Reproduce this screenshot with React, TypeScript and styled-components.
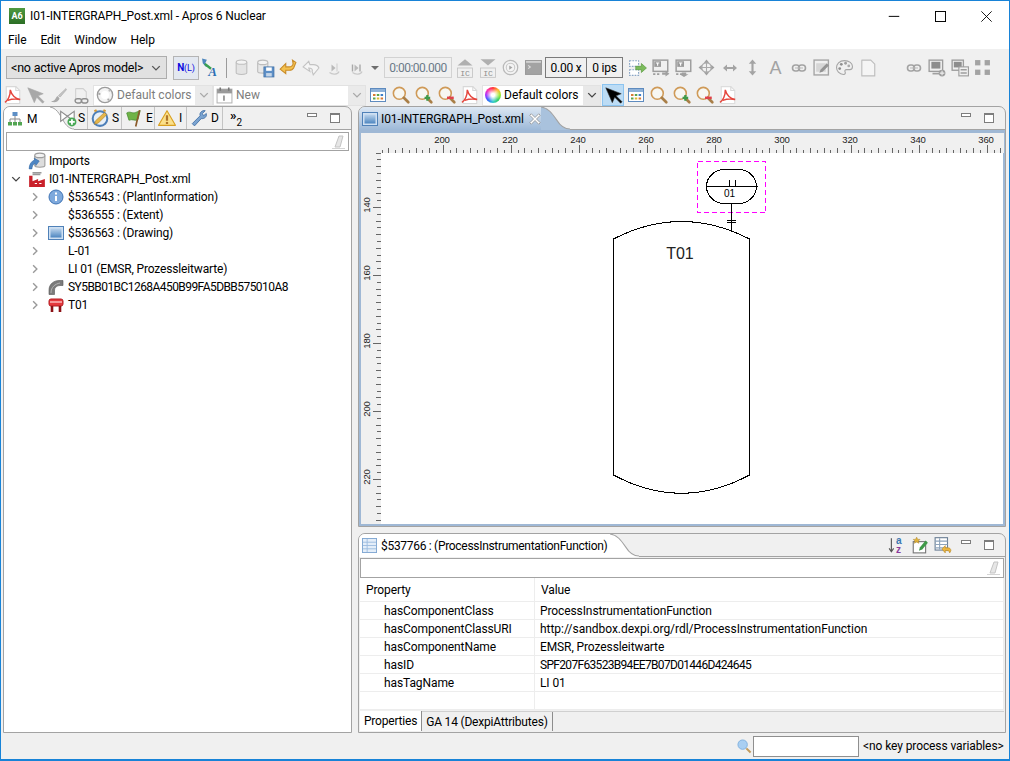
import { ReactNode } from "react";
import styled, { createGlobalStyle } from "styled-components";

const FONT = `"Roboto", "Noto Sans", "Liberation Sans", sans-serif`;
const GREY = "#a3a3a3";

const GlobalStyle = createGlobalStyle`
  html, body { margin: 0; padding: 0; background: #f0f0f0; }
  body { font-family: ${FONT}; font-size: 12px; color: #000; letter-spacing: -0.1px; }
  * { box-sizing: border-box; }
`;

const Glyph = styled.svg.attrs({ viewBox: "0 0 16 16" })<{ $size?: number }>`
  width: ${(p) => p.$size ?? 16}px;
  height: ${(p) => p.$size ?? 16}px;
  flex: none;
  display: block;
  overflow: visible;
`;

/* ---------- toolbar icons ---------- */

const PdfIcon = ({ muted }: { muted?: boolean }) => (
  <Glyph $size={18}>
    <path d="M2 .5h8.5L14 4v11.5H2z" fill="#fff" stroke={muted ? "#ddd" : "#d8d8d8"} />
    <path d="M10.5.5V4H14" fill="none" stroke="#d8d8d8" />
    <path
      d="M.8 14.6C3.2 13.4 5.8 8.6 5.6 3.4c1 4 3.4 7.4 8.8 8.6-4-.7-8-.3-11 .8"
      fill="none"
      stroke="#e5453c"
      strokeWidth="1.3"
    />
  </Glyph>
);

const CursorIcon = ({ muted }: { muted?: boolean }) => (
  <Glyph $size={19}>
    <path d="M1.5 1.5 7 14l2-4.6 5 5.1 1.2-1.2-5-5L14.500 6.500z" fill={muted ? "#a8a8a8" : "#000"} stroke={muted ? "#a8a8a8" : "#333"} strokeWidth=".5" />
  </Glyph>
);

const BrushIcon = () => (
  <Glyph $size={17}>
    <path d="M15 1.500 8 8l1.500 1.500L15.500 2.500z" fill="#c4c4c4" stroke="#aaa" strokeWidth=".6" />
    <path d="M7.500 8.500c-2 .5-2 3-3.500 4-1 .7-2 .8-3 .8 2 1.500 6 1.700 8-2.300z" fill="#a9a9a9" />
  </Glyph>
);

const DocLinkIcon = () => (
  <Glyph $size={17}>
    <path d="M2.500 1.500h7l3 3v7" fill="none" stroke="#d0d0d0" />
    <path d="M2.500 1.500v11" fill="none" stroke="#d0d0d0" />
    <rect x="2" y="11" width="6" height="4" rx="2" fill="none" stroke="#8f8f8f" strokeWidth="1.300" />
    <rect x="8" y="11" width="6" height="4" rx="2" fill="none" stroke="#8f8f8f" strokeWidth="1.300" />
  </Glyph>
);

const RingIcon = () => (
  <Glyph $size={18}>
    <circle cx="8" cy="8" r="6.800" fill="#f4f4f4" stroke="#9c9c9c" strokeWidth="1.200" />
    <circle cx="8" cy="8" r="3.500" fill="#fff" />
    <circle cx="3" cy="7" r="1" fill="#aaa" />
    <circle cx="12" cy="4" r="1" fill="#bbb" />
    <circle cx="11" cy="12" r="1" fill="#aaa" />
  </Glyph>
);

const CalendarIcon = () => (
  <Glyph $size={17}>
    <rect x="1" y="2" width="14" height="13" fill="#fff" stroke="#b5b5b5" />
    <rect x="1" y="2" width="14" height="4" fill="#9a9a9a" />
    <path d="M4 .5v3M12 .5v3" stroke="#777" strokeWidth="1.500" />
    <path d="M7.500 8v5" stroke="#888" strokeWidth="1.500" />
  </Glyph>
);

const TableIcon = () => (
  <Glyph $size={16}>
    <rect x=".5" y="1.500" width="15" height="13" fill="#fff" stroke="#5e8bbf" />
    <rect x="1" y="2" width="14" height="3" fill="#8fb2d9" />
    <path d="M3 7h2.500v2H3z" fill="#d97a35" />
    <path d="M6.800 7h2.500v2H6.800z" fill="#5aa34c" />
    <path d="M10.600 7h2.500v2h-2.500z" fill="#3f7ec6" />
    <path d="M3 10.500h2.500v2H3z" fill="#5aa34c" />
    <path d="M6.800 10.500h2.500v2H6.800z" fill="#e0b92f" />
    <path d="M10.600 10.500h2.500v2h-2.500z" fill="#d97a35" />
  </Glyph>
);

const PropsTableIcon = () => (
  <Glyph $size={15}>
    <rect x=".5" y=".5" width="15" height="15" fill="#e4eef9" stroke="#7fa6d2" />
    <path d="M1 4.500h14M1 8h14M1 11.500h14M5.500 1v14" stroke="#9dbde0" />
  </Glyph>
);

const Magnifier = ({ mark }: { mark?: "plus" | "minus" }) => (
  <Glyph $size={18}>
    <circle cx="6.500" cy="6.500" r="5.300" fill="#f7f7f2" stroke="#cf9a58" strokeWidth="1.400" />
    <path d="M10.500 10.500l4 4" stroke="#a97f48" strokeWidth="2.400" strokeLinecap="round" />
    {mark === "plus" && <path d="M8.500 10.500h5M11 8v5" stroke="#3f9a49" strokeWidth="2" />}
    {mark === "minus" && <path d="M8 10.500h6" stroke="#e0424a" strokeWidth="2.200" />}
  </Glyph>
);

const AproSwitchIcon = () => (
  <Glyph $size={22}>
    <path d="M1.500 1l3.500 1-1.200 2.500L7 7H4.200L2 4.500z" fill="#4d86bd" />
    <path d="M3.500 5l4.500 3.500" stroke="#3aa04f" strokeWidth="1.800" />
    <text x="6" y="14" fontFamily="Liberation Serif, serif" fontWeight="700" fontStyle="italic" fontSize="9.5" fill="#2d6fb5">A</text>
  </Glyph>
);

const DbIcon = () => (
  <Glyph $size={17}>
    <path d="M3 3v10c0 2 10 2 10 0V3" fill="#e4e4e4" stroke="#bdbdbd" />
    <ellipse cx="8" cy="3" rx="5" ry="2" fill="#f4f4f4" stroke="#bdbdbd" />
  </Glyph>
);

const DbSaveIcon = () => (
  <Glyph $size={18}>
    <path d="M1.500 3v8c0 2 9 2 9 0V3" fill="#e8e8e8" stroke="#bdbdbd" />
    <ellipse cx="6" cy="3" rx="4.500" ry="2" fill="#f4f4f4" stroke="#bdbdbd" />
    <rect x="7" y="7" width="9" height="9" fill="#5d8fc6" stroke="#3e6ea3" strokeWidth=".6" />
    <rect x="9" y="7.500" width="5" height="3" fill="#fff" />
    <rect x="9" y="12.500" width="5" height="3" fill="#c4d5e8" />
  </Glyph>
);

const UndoIcon = ({ ghost }: { ghost?: boolean }) =>
  ghost ? (
    <Glyph $size={18}>
      <path d="M1 7l5-5 1 3h3c4 0 5 3 5 3l-5 6-1-3c1-2-1-3-3-3H6l1 3z" fill="#f5f5f5" stroke="#c3c3c3" />
    </Glyph>
  ) : (
    <Glyph $size={18}>
      <path d="M1 9l5 4V10h3c3 0 4-2 4-2l2-5-3-2 .5 3c0 2-2 3-3.500 3H6V4z" fill="#f3c14e" stroke="#c98c2a" />
    </Glyph>
  );

const StepIcon = ({ bars }: { bars?: boolean }) => (
  <Glyph $size={16}>
    <path d="M3.500 12.500c3 2.500 8.500 2 9.500-1" fill="none" stroke="#c9c9c9" strokeWidth="1.200" />
    <path d="M5.500 4.500l4 3.500-4 3.500z" fill="#b9b9b9" />
    {bars && <path d="M3.500 4.500v7M11 4.500v7" stroke="#a9a9a9" strokeWidth="1.400" />}
    {!bars && <path d="M11 3.500v8" stroke="#d2d2d2" strokeWidth="1.200" />}
  </Glyph>
);

const ICIcon = ({ up }: { up?: boolean }) => (
  <Glyph $size={20}>
    <path d={up ? "M8 1l6 5H2z" : "M2 1h12L8 6z"} fill="#b0b0b0" />
    <rect x="2" y="8" width="12" height="7.500" fill="none" stroke="#c4c4c4" strokeWidth=".7" />
    <text x="8" y="14.500" textAnchor="middle" fontFamily="Liberation Mono, monospace" fontSize="6.500" fill="#8e8e8e">IC</text>
  </Glyph>
);

const ClockIcon = () => (
  <Glyph $size={17}>
    <circle cx="8" cy="8" r="6.800" fill="#f4f4f4" stroke="#b9b9b9" strokeWidth="1.200" />
    <circle cx="8" cy="8" r="4" fill="none" stroke="#c8c8c8" />
    <path d="M6.800 6l3 2-3 2z" fill="#a5a5a5" />
  </Glyph>
);

const ConsoleIcon = () => (
  <Glyph $size={17}>
    <rect x=".5" y="1.500" width="15" height="13" fill="#a3a3a3" stroke="#9a9a9a" />
    <rect x="1" y="2" width="14" height="1.500" fill="#d8d8d8" />
    <path d="M3 6l2 1.500L3 9" fill="none" stroke="#e0e0e0" />
  </Glyph>
);

const ExportArrowIcon = () => (
  <Glyph $size={18}>
    <rect x=".5" y="1.500" width="8" height="5" fill="#fff" stroke="#8aa6c6" strokeDasharray="1.500 1" />
    <rect x=".5" y="9.500" width="8" height="5" fill="#fff" stroke="#8aa6c6" strokeDasharray="1.500 1" />
    <path d="M6 6.500h5V4l4.500 4-4.500 4V9.500H6z" fill="#7cbb5c" stroke="#569a3c" strokeWidth=".6" />
  </Glyph>
);

const AlignIcon = ({ flip }: { flip?: boolean }) => (
  <Glyph $size={18}>
    <rect x="1" y="1" width="13" height="10" fill="#f0f0f0" stroke="#9d9d9d" strokeWidth="1.300" />
    <rect x="2" y="2" width="6" height="5" fill="#9b9b9b" />
    <path d="M3.500 3.500h3M5 3.500V6" stroke="#fff" />
    {flip ? (
      <path d="M6 12h4v1.500h2L8 16l-4-2.500h2z" fill="#a0a0a0" />
    ) : (
      <path d="M9 12h3v-1.500l3.500 2.500-3.500 2.500V14H9z" fill="#a0a0a0" />
    )}
    <path d="M1 13.500h2M4.500 13.500h2" stroke="#9d9d9d" strokeWidth="1.500" />
  </Glyph>
);

const MoveIcon = () => (
  <Glyph $size={17}>
    <circle cx="8" cy="8" r="4.500" fill="none" stroke="#aaa" strokeWidth="1.300" />
    <path d="M8 .5l2.500 3h-5zM8 15.500l-2.500-3h5zM.5 8l3-2.500v5zM15.500 8l-3 2.500v-5z" fill="#a0a0a0" />
    <path d="M8 3v10M3 8h10" stroke="#aaa" />
  </Glyph>
);

const ResizeHIcon = () => (
  <Glyph $size={16}>
    <path d="M1 8l4-3.500v2.500h6V4.500L15 8l-4 3.500V9H5v2.500z" fill="#a4a4a4" />
  </Glyph>
);

const ResizeVIcon = () => (
  <Glyph $size={17}>
    <path d="M8 .5l3.500 4H9v7h2.500l-3.500 4-3.500-4H7v-7H4.500z" fill="#a4a4a4" />
  </Glyph>
);

const ToolLetter = styled.span`
  font-family: "Liberation Sans", sans-serif;
  font-size: 18px;
  line-height: 22px;
  letter-spacing: 0;
  color: #a3a3a3;
`;

const LinkIcon = () => (
  <Glyph $size={16}>
    <rect x="1.500" y="5" width="7" height="6" rx="3" fill="none" stroke="#a3a3a3" strokeWidth="1.600" />
    <rect x="7.500" y="5" width="7" height="6" rx="3" fill="none" stroke="#a3a3a3" strokeWidth="1.600" />
    <path d="M4 8h8" stroke="#b9b9b9" />
  </Glyph>
);

const EditBoxIcon = () => (
  <Glyph $size={17}>
    <rect x="1" y="1" width="13.500" height="14" fill="#f0f0f0" stroke="#a5a5a5" strokeWidth="1.300" />
    <path d="M3 4h9v8H3z" fill="#d6d6d6" />
    <path d="M6 13l1-3 6-6 2 2-6 6z" fill="#949494" />
  </Glyph>
);

const PaletteIcon = () => (
  <Glyph $size={17}>
    <path d="M8 1.500C3 1.500.5 5 .5 8s2.500 6.500 6.500 6.500c2 0 2-1.500 1.500-2.500s0-2 1.500-2h3c2 0 2.500-1.500 2.500-3 0-3-3-5.500-7.500-5.500z" fill="#f0f0f0" stroke="#a5a5a5" />
    <circle cx="5" cy="5" r="1.300" fill="#8f8f8f" />
    <circle cx="9" cy="4" r="1.300" fill="#9f9f9f" />
    <circle cx="3.500" cy="9" r="1.300" fill="#8f8f8f" />
    <circle cx="12" cy="6.500" r="1.300" fill="#aaa" />
  </Glyph>
);

const BlankDocIcon = () => (
  <Glyph $size={18}>
    <path d="M2.500 1h8l3.500 3.500V15H2.500z" fill="#f5f5f5" stroke="#bdbdbd" strokeLinejoin="round" />
  </Glyph>
);

const ScreenPlusIcon = () => (
  <Glyph $size={18}>
    <rect x="1" y="1" width="12" height="10" fill="#f0f0f0" stroke="#9d9d9d" strokeWidth="1.200" />
    <rect x="3" y="2.500" width="8" height="6" fill="#8d8d8d" />
    <path d="M4 13h6" stroke="#a0a0a0" strokeWidth="1.500" />
    <circle cx="12.500" cy="12.500" r="3" fill="#9d9d9d" />
    <path d="M10.500 12.500h4M12.500 10.500v4" stroke="#eee" />
  </Glyph>
);

const ScreenStackIcon = () => (
  <Glyph $size={18}>
    <rect x="1" y="1" width="10" height="9" fill="#f0f0f0" stroke="#9d9d9d" strokeWidth="1.200" />
    <rect x="2.500" y="2.500" width="7" height="5" fill="#8d8d8d" />
    <rect x="7" y="7" width="8.500" height="8" fill="#f0f0f0" stroke="#9d9d9d" />
    <path d="M8.500 9.500h5.500M8.500 12.500h5.500" stroke="#9d9d9d" strokeWidth="1.400" />
  </Glyph>
);

const FourBoxIcon = () => (
  <Glyph $size={17}>
    <rect x="1" y="1" width="5" height="5" fill="#a3a3a3" />
    <rect x="10" y="1" width="5" height="5" fill="#a3a3a3" />
    <rect x="1" y="10" width="5" height="5" fill="#a3a3a3" />
    <rect x="10" y="10" width="5" height="5" fill="#a3a3a3" />
  </Glyph>
);

const EraserIcon = () => (
  <Glyph $size={16}>
    <path d="M5 13l4-11h4l-3 11z" fill="#e6e6e6" stroke="#c4c4c4" />
    <path d="M2 14.500h13" stroke="#d4d4d4" />
  </Glyph>
);

/* ---------- tab and tree icons ---------- */

const HierarchyIcon = () => (
  <Glyph>
    <rect x="5.500" y="1" width="5" height="4" fill="#5d8fc6" />
    <path d="M8 5v3M3 11V8h10v3M8 8v3" fill="none" stroke="#888" />
    <rect x="1" y="11" width="4" height="3.500" fill="#52a552" />
    <rect x="6" y="11" width="4" height="3.500" fill="#52a552" />
    <rect x="11" y="11" width="4" height="3.500" fill="#52a552" />
  </Glyph>
);

const MxPlusIcon = () => (
  <Glyph $size={18}>
    <path d="M1.500 2v9l6-4.500 6 4.500V2L7.500 6.500z" fill="#fff" stroke="#8d8d8d" />
    <circle cx="11.500" cy="11.500" r="4" fill="#4aa856" />
    <path d="M9 11.500h5M11.500 9v5" stroke="#fff" strokeWidth="1.600" />
  </Glyph>
);

const ClockPencilIcon = () => (
  <Glyph $size={18}>
    <circle cx="8" cy="8.500" r="6.500" fill="#e8f0f8" stroke="#4d7fb8" strokeWidth="1.800" />
    <path d="M3 2l2-1M13 2l-2-1" stroke="#d39a3a" strokeWidth="1.800" />
    <path d="M3 13.500l1-3L12 3l2 2-7.500 7.500z" fill="#e6b64a" stroke="#a87c26" strokeWidth=".5" />
  </Glyph>
);

const FlagIcon = () => (
  <Glyph $size={18}>
    <path d="M1.500 3.500c3-2 5 1 8-.5l4-1.500-2 8c-3 1.500-5-1-8 .5z" fill="#6fb347" stroke="#3f8428" strokeWidth=".6" />
    <path d="M13 1l-3.500 14.500" stroke="#8a5a2a" strokeWidth="1.500" />
  </Glyph>
);

const WarningIcon = () => (
  <Glyph $size={18}>
    <path d="M8 1.500 15.500 14.500H.5z" fill="#fbe08a" stroke="#d9a021" strokeLinejoin="round" />
    <path d="M8 5.500v5" stroke="#b0762a" strokeWidth="2" />
    <rect x="7" y="11.500" width="2" height="1.800" fill="#b0762a" />
  </Glyph>
);

const WrenchIcon = () => (
  <Glyph $size={18}>
    <path d="M2 13l7-7c-.8-2.500 1.500-5 4.500-4.500L11 4l1 2 2.500-2c.8 3-2 5-4.500 4.500L4 15z" fill="#7ba4d1" stroke="#4673a8" strokeWidth=".8" />
  </Glyph>
);

const DrawingIcon = () => (
  <Glyph>
    <rect x=".5" y="1.500" width="15" height="13" fill="#cfe0f2" stroke="#4f81b8" />
    <rect x="2.500" y="3.500" width="11" height="9" fill="url(#drawing-fill)" />
    <defs>
      <linearGradient id="drawing-fill" x1="0" x2="0" y1="0" y2="1">
        <stop offset="0" stopColor="#bcd4ec" />
        <stop offset="1" stopColor="#4d86c0" />
      </linearGradient>
    </defs>
  </Glyph>
);

const CloseTabIcon = () => (
  <Glyph $size={12}>
    <path d="M3 1l5 5 5-5 2 2-5 5 5 5-2 2-5-5-5 5-2-2 5-5-5-5z" fill="#fff" stroke="#8a8a8a" />
  </Glyph>
);

const ImportsIcon = () => (
  <Glyph $size={18}>
    <path d="M6 3v9c0 2 9 2 9 0V3" fill="#ddd" stroke="#9d9d9d" />
    <ellipse cx="10.500" cy="3" rx="4.500" ry="2" fill="#f2f2f2" stroke="#9d9d9d" />
    <path d="M1 15c0-4 2-7 5-8l-.5-1.500L10 8l-3 4-.5-2c-2 .5-3 3-3 5z" fill="#4d86c4" stroke="#2f66a3" strokeWidth=".5" />
  </Glyph>
);

const FactoryIcon = () => (
  <Glyph $size={18}>
    <path d="M4 2.500h8M4 4h7" stroke="#9a9a9a" strokeWidth="1.300" />
    <path d="M1 15V5h3v5l5-2v2l6-2v7z" fill="#c9202a" />
    <path d="M6 12h2M10 12h2" stroke="#fff" />
  </Glyph>
);

const InfoIcon = () => (
  <Glyph>
    <circle cx="8" cy="8" r="7" fill="#7ea9dc" stroke="#3f74b5" />
    <path d="M8 7v5" stroke="#fff" strokeWidth="2" />
    <rect x="7" y="3.500" width="2" height="2" fill="#fff" />
  </Glyph>
);

const PipeIcon = () => (
  <Glyph>
    <path d="M1 15.500V11C1 5 6 1.500 11 1.500h4v5h-3C9 6.500 6.500 8.500 6.500 11v4.500z" fill="#7b7b7b" stroke="#555" strokeWidth=".6" />
    <path d="M3 14c0-6 4-9 9-10" stroke="#b5b5b5" fill="none" />
  </Glyph>
);

const VesselIcon = () => (
  <Glyph>
    <rect x="1" y="2" width="14" height="7" rx="2" fill="#e5383d" stroke="#b51c22" />
    <path d="M2 5h12" stroke="#ffd0d0" strokeWidth="1.300" />
    <path d="M4 9v6M12 9v6" stroke="#8c1116" strokeWidth="2.600" />
  </Glyph>
);

const SearchSmallIcon = () => (
  <Glyph $size={15}>
    <circle cx="6" cy="6" r="5" fill="#a9cff2" stroke="#7fb0de" />
    <path d="M10 10l4.500 4.500" stroke="#c19a5b" strokeWidth="2.200" />
  </Glyph>
);

const SortAzIcon = () => (
  <Glyph $size={18}>
    <path d="M3 2v11M1 11l2 3 2-3" fill="none" stroke="#555" />
    <text x="7" y="7.500" fontFamily="Liberation Sans, sans-serif" fontWeight="700" fontSize="9" fill="#3d78b0">a</text>
    <text x="7" y="15.500" fontFamily="Liberation Sans, sans-serif" fontWeight="700" fontSize="9" fill="#8a3a9c">z</text>
  </Glyph>
);

const PinEditIcon = () => (
  <Glyph $size={18}>
    <rect x="2" y="5" width="11" height="10" fill="#fff" stroke="#777" />
    <path d="M5 1l1 2h2L6.500 4.500l.5 2L5 5.300 3 6.500l.5-2L2 3h2z" fill="#e2b33a" stroke="#a67c18" strokeWidth=".4" />
    <path d="M8 10l5-6 2 2-5 6-3 1z" fill="#3f9a49" />
  </Glyph>
);

const TableUndoIcon = () => (
  <Glyph $size={18}>
    <rect x="1" y="1.500" width="11" height="11" fill="#fff" stroke="#6b7f95" />
    <path d="M1 4.500h11M1 7.500h11M1 10.500h11M5 2v10" stroke="#8ea4bb" />
    <path d="M7 11.500l3-3v2h2.500c1.500 0 2.500 1 2.500 2.500l-1 2-1-2h-3v2z" fill="#edb63f" stroke="#b0801d" strokeWidth=".5" />
  </Glyph>
);

/* ---------- chrome ---------- */

const Shell = styled.div`
  width: 1010px;
  height: 761px;
  display: flex;
  flex-direction: column;
  overflow: hidden;
  background: #f0f0f0;
  border: 1px solid #1883d7;
  border-bottom-width: 2px;
`;

const TitleBar = styled.header`
  height: 30px;
  flex: none;
  display: flex;
  align-items: center;
  background: #fff;
  padding-left: 8px;
`;

const AppBadge = styled.div`
  width: 16px;
  height: 16px;
  background: linear-gradient(#4f9a41, #2b6e25);
  color: #fff;
  font-size: 9px;
  font-weight: 700;
  display: flex;
  align-items: center;
  justify-content: center;
  margin-right: 5px;
`;

const WindowTitle = styled.div`
  flex: 1;
  white-space: nowrap;
`;

const WindowButton = styled.div`
  width: 46px;
  height: 30px;
  display: flex;
  align-items: center;
  justify-content: center;
`;

const MenuBar = styled.nav`
  height: 18px;
  flex: none;
  display: flex;
  align-items: center;
  gap: 14px;
  padding-left: 7px;
  background: #fff;
`;

const ToolRows = styled.div`
  flex: none;
  padding-top: 3px;
`;

const ToolRow = styled.div<{ $tall?: boolean }>`
  display: flex;
  align-items: center;
  height: ${(p) => (p.$tall ? 31 : 22)}px;
  margin-bottom: ${(p) => (p.$tall ? 1 : 0)}px;
`;

const Slot = styled.div<{ $gap?: number }>`
  width: 23px;
  height: 22px;
  flex: none;
  display: flex;
  align-items: center;
  justify-content: center;
  margin-left: ${(p) => p.$gap ?? 0}px;
`;

const ModelCombo = styled.div`
  width: 161px;
  height: 23px;
  flex: none;
  margin: 0 6px 0 5px;
  padding: 0 5px 0 4px;
  display: flex;
  align-items: center;
  justify-content: space-between;
  background: #e1e1e1;
  border: 1px solid #adadad;
  font-size: 12.5px;
  letter-spacing: -0.2px;
  white-space: nowrap;
`;

const ToggleButton = styled.div`
  width: 26px;
  height: 24px;
  flex: none;
  display: flex;
  align-items: center;
  justify-content: center;
  background: #e3e8f0;
  border: 1px solid #b4b4b4;
  color: #0a0ae0;
  font-size: 10px;
  font-weight: 700;
`;

const ThinParen = styled.span`
  font-weight: 400;
  font-size: 9px;
`;

const Separator = styled.div`
  width: 8px;
  height: 20px;
  flex: none;
  background: linear-gradient(#9b9b9b, #9b9b9b) center / 1px 100% no-repeat;
`;

const DropArrow = styled.div`
  width: 0;
  height: 0;
  margin: 0 2px 0 3px;
  border-style: solid;
  border-width: 4px 4px 0;
  border-color: #6e6e6e transparent transparent;
`;

const Spacer = styled.div<{ $w: number }>`
  width: ${(p) => p.$w}px;
  flex: none;
`;

const TimeField = styled.div`
  width: 68px;
  height: 21px;
  flex: none;
  margin-left: 1px;
  display: flex;
  align-items: center;
  justify-content: center;
  background: #f0f0f0;
  border: 1px solid #d2d2d2;
  color: #6b7a88;
  font-size: 12px;
  letter-spacing: -0.5px;
`;

const SpeedBox = styled.div<{ $w: number }>`
  width: ${(p) => p.$w}px;
  height: 21px;
  flex: none;
  display: flex;
  align-items: center;
  justify-content: center;
  border: 1px solid #7a7a7a;
  font-size: 12px;
  letter-spacing: -0.2px;
  & + & {
    border-left-width: 0;
  }
`;

const StyleCombo = styled.div<{ $w: number; $muted?: boolean }>`
  width: ${(p) => p.$w}px;
  height: 21px;
  flex: none;
  margin-left: ${(p) => (p.$muted ? 0 : 1)}px;
  padding-left: 2px;
  display: flex;
  align-items: center;
  gap: 3px;
  background: #fff;
  border: 1px solid #e2e2e2;
  color: ${(p) => (p.$muted ? "#7d7d7d" : "#000")};
  font-size: 12px;
  letter-spacing: 0;
`;

const ComboLabel = styled.span`
  flex: 1;
  white-space: nowrap;
`;

const ComboChevron = styled.div<{ $muted?: boolean }>`
  width: 17px;
  height: 19px;
  flex: none;
  display: flex;
  align-items: center;
  justify-content: center;
  background: ${(p) => (p.$muted ? "#eaeaea" : "#e8e8e8")};
`;

const ColorWheel = styled.div`
  width: 16px;
  height: 16px;
  flex: none;
  border-radius: 50%;
  background: radial-gradient(circle, #fff 15%, transparent 60%),
    conic-gradient(#f33, #fb3, #9e3, #3c6, #3cc, #36f, #a3f, #f3a, #f33);
`;

const PickButton = styled.div`
  width: 22px;
  height: 22px;
  flex: none;
  display: flex;
  align-items: center;
  justify-content: center;
  background: #bcdcf5;
  border: 1px solid #8cc4f0;
`;

const Chevron = ({ color = "#555", size = 10, dir = "down" }: { color?: string; size?: number; dir?: "down" | "right" }) => (
  <Glyph $size={size}>
    <path
      d={dir === "down" ? "M2 5l6 6 6-6" : "M5 2l6 6-6 6"}
      fill="none"
      stroke={color}
      strokeWidth="2.200"
    />
  </Glyph>
);

/* ---------- workbench ---------- */

const Workspace = styled.main`
  flex: 1;
  min-height: 0;
  display: flex;
  gap: 6px;
  padding: 0 3px 0 2px;
`;

const Column = styled.div<{ $w: number }>`
  width: ${(p) => p.$w}px;
  flex: none;
  display: flex;
  flex-direction: column;
  gap: 6px;
`;

const Panel = styled.section<{ $h?: number }>`
  height: ${(p) => (p.$h ? `${p.$h}px` : "100%")};
  flex: none;
  display: flex;
  flex-direction: column;
  border: 1px solid ${GREY};
  border-radius: 7px 7px 0 0;
  background: #f0f0f0;
  overflow: hidden;
`;

const TabStrip = styled.div`
  position: relative;
  height: 23px;
  flex: none;
  display: flex;
  align-items: stretch;
  border-bottom: 1px solid ${GREY};
`;

const Tab = styled.div<{ $w: number; $tone?: "white" | "blue" | "none"; $line?: boolean; $gap?: number }>`
  position: relative;
  z-index: 1;
  width: ${(p) => p.$w}px;
  flex: none;
  display: flex;
  align-items: center;
  gap: ${(p) => p.$gap ?? 3}px;
  padding-left: 3px;
  margin-bottom: ${(p) => (p.$tone && p.$tone !== "none" ? -1 : 0)}px;
  white-space: nowrap;
  background: ${(p) =>
    p.$tone === "white" ? "#fff" : p.$tone === "blue" ? "linear-gradient(#dce7f3, #9db9d8)" : "transparent"};
  border-right: ${(p) => (p.$line ? `1px solid #c4c4c4` : "0")};
`;

const TabTitle = styled.span`
  letter-spacing: -0.3px;
`;

const TabCurve = styled.svg.attrs({ viewBox: "0 0 24 23", preserveAspectRatio: "none" })<{
  $w?: number;
  $overlap?: number;
}>`
  width: ${(p) => p.$w ?? 24}px;
  height: 23px;
  flex: none;
  margin-right: -${(p) => p.$overlap ?? 0}px;
`;

const PanelActions = styled.div`
  margin-left: auto;
  display: flex;
  align-items: center;
  gap: 5px;
  padding-right: 11px;
`;

const MinBtn = styled.div`
  width: 10px;
  height: 4px;
  border: 1px solid #7d7d7d;
  background: #fff;
  margin: 0 8px 6px 4px;
`;

const MaxBtn = styled.div`
  width: 10px;
  height: 10px;
  border: 1px solid #7d7d7d;
  border-top-width: 2px;
  background: #fff;
`;

const OverflowChevrons = styled.span`
  font-weight: 700;
  font-size: 13px;
  line-height: 1;
  position: relative;
  top: -3px;
`;

const OverflowCount = styled.span`
  font-size: 10px;
  line-height: 1;
  position: relative;
  top: 5px;
`;

const LeftBody = styled.div`
  flex: 1;
  background: #fff;
  padding: 2px 2px 0 2px;
`;

const FilterBar = styled.div<{ $h: number }>`
  height: ${(p) => p.$h}px;
  flex: none;
  display: flex;
  align-items: center;
  justify-content: flex-end;
  padding-right: 2px;
  background: #fff;
  border: 1px solid ${GREY};
`;

const TreeList = styled.ul`
  list-style: none;
  margin: 1px 0 0;
  padding: 0;
`;

const TreeRow = styled.li<{ $depth: number; $tracking?: number }>`
  height: 18px;
  display: flex;
  align-items: center;
  padding-left: ${(p) => 4 + p.$depth * 19}px;
  white-space: nowrap;
  letter-spacing: ${(p) => p.$tracking ?? -0.15}px;
`;

const Twisty = styled.span`
  width: 11px;
  height: 11px;
  flex: none;
  margin-right: 8px;
  display: flex;
  align-items: center;
  justify-content: center;
`;

const TreeIconBox = styled.span`
  width: 16px;
  height: 18px;
  flex: none;
  margin-right: 4px;
  display: flex;
  align-items: center;
  justify-content: center;
`;

const EditorFrame = styled.div`
  flex: 1;
  border: solid #9fb8d5;
  border-width: 3px 2px 2px;
  background: #fff;
`;

const Canvas = styled.svg.attrs({ viewBox: "361 133 643 391" })`
  display: block;
  width: 643px;
  height: 391px;
`;

const PropsBody = styled.div`
  flex: 1;
  display: flex;
  flex-direction: column;
  padding: 1px 1px 0;
  min-height: 0;
`;

const Grid = styled.div`
  background: #fff;
  flex: none;
`;

const GridRow = styled.div<{ $header?: boolean }>`
  display: grid;
  grid-template-columns: 175px 1fr;
  height: ${(p) => (p.$header ? 24 : 18)}px;
  border-bottom: 1px solid #ededed;
`;

const GridCell = styled.div<{ $pad: number; $tracking?: number }>`
  display: flex;
  align-items: center;
  padding-left: ${(p) => p.$pad}px;
  border-right: 1px solid #ededed;
  white-space: nowrap;
  letter-spacing: ${(p) => p.$tracking ?? -0.1}px;
`;

const BottomTabs = styled.div`
  height: 20px;
  flex: none;
  display: flex;
  margin-top: 1px;
  border-top: 1px solid #d0d0d0;
  letter-spacing: -0.2px;
`;

const BottomTab = styled.div<{ $active?: boolean }>`
  display: flex;
  align-items: center;
  padding: 0 4px;
  white-space: nowrap;
  background: ${(p) => (p.$active ? "#fff" : "transparent")};
  border-right: 1px solid #8d8d8d;
  margin-top: ${(p) => (p.$active ? -1 : 0)}px;
`;

const StatusBar = styled.footer`
  height: 26px;
  flex: none;
  display: flex;
  align-items: center;
  padding-left: 736px;
`;

const StatusInput = styled.div`
  width: 106px;
  height: 21px;
  flex: none;
  margin: 0 4px 0 1px;
  background: #fff;
  border: 1px solid #8f8f8f;
`;

/* ---------- data ---------- */

type TreeItem = { depth: number; label: string; icon?: ReactNode; open?: boolean; leaf?: boolean; tracking?: number };

const treeItems: TreeItem[] = [
  { depth: 0, label: "Imports", icon: <ImportsIcon />, leaf: true },
  { depth: 0, label: "I01-INTERGRAPH_Post.xml", icon: <FactoryIcon />, open: true },
  { depth: 1, label: "$536543 : (PlantInformation)", icon: <InfoIcon /> },
  { depth: 1, label: "$536555 : (Extent)" },
  { depth: 1, label: "$536563 : (Drawing)", icon: <DrawingIcon /> },
  { depth: 1, label: "L-01" },
  { depth: 1, label: "LI 01 (EMSR, Prozessleitwarte)" },
  { depth: 1, label: "SY5BB01BC1268A450B99FA5DBB575010A8", icon: <PipeIcon />, tracking: -0.56 },
  { depth: 1, label: "T01", icon: <VesselIcon /> },
];

const properties: { name: string; value: string; tracking?: number }[] = [
  { name: "hasComponentClass", value: "ProcessInstrumentationFunction" },
  { name: "hasComponentClassURI", value: "http://sandbox.dexpi.org/rdl/ProcessInstrumentationFunction", tracking: -0.03 },
  { name: "hasComponentName", value: "EMSR, Prozessleitwarte" },
  { name: "hasID", value: "SPF207F63523B94EE7B07D01446D424645", tracking: -0.68 },
  { name: "hasTagName", value: "LI 01" },
  { name: "", value: "" },
];

const range = (n: number) => Array.from({ length: n }, (_, i) => i);

/* the ruler scale is 3.4px per unit, with a tick each 2 units */
function Rulers() {
  const topTicks = range(92).map((i) => {
    const x = 381.5 + i * 6.8;
    const unit = 182 + i * 2;
    return { x, len: unit % 20 === 0 ? 8 : unit % 4 === 0 ? 5 : 3 };
  });
  const leftTicks = range(55).map((i) => {
    const y = 152.5 + i * 6.8;
    const unit = 124 + i * 2;
    return { y, len: unit % 20 === 0 ? 8 : unit % 4 === 0 ? 5 : 4 };
  });
  const topLabels = [200, 220, 240, 260, 280, 300, 320, 340, 360];
  const leftLabels = [140, 160, 180, 200, 220];
  return (
    <g>
      <rect x="361" y="133" width="643" height="20" fill="#f0f0f0" />
      <rect x="361" y="133" width="20" height="391" fill="#f0f0f0" />
      {topTicks.map((t) => (
        <path key={t.x} d={`M${Math.round(t.x) + 0.5} 153v-${t.len}`} stroke="#666" />
      ))}
      {leftTicks.map((t) => (
        <path key={t.y} d={`M381 ${Math.round(t.y) + 0.5}h-${t.len}`} stroke="#666" />
      ))}
      {topLabels.map((v, i) => (
        <text key={v} x={442 + i * 68} y="143" textAnchor="middle" fontFamily="Liberation Sans, sans-serif" fontSize="9.5" fill="#222">
          {v}
        </text>
      ))}
      {leftLabels.map((v, i) => {
        const y = 205 + i * 68;
        return (
          <text key={v} transform={`translate(370 ${y}) rotate(-90)`} textAnchor="middle" fontFamily="Liberation Sans, sans-serif" fontSize="9.5" fill="#222">
            {v}
          </text>
        );
      })}
    </g>
  );
}

function Diagram() {
  return (
    <g>
      <g fill="none" stroke="#000" shapeRendering="crispEdges">
        <rect x="697.5" y="161.5" width="68" height="51" stroke="#f0f" strokeDasharray="5 3" />
        <rect x="706.5" y="169.5" width="50" height="34" rx="18" ry="17" />
        <path d="M706 186.500h52M729.500 180v6M735.500 180v6M731.500 204v27M727 220.500h9M727 222.500h9" />
        <path d="M613.500 239Q681.500 204 749.500 239V475Q681.500 511.500 613.500 475Z" />
      </g>
      <text x="729.500" y="197" textAnchor="middle" fontFamily="Liberation Sans, sans-serif" fontSize="10" fill="#000">
        01
      </text>
      <text x="680" y="259" textAnchor="middle" fontFamily="Liberation Sans, sans-serif" fontSize="16" fill="#222">
        T01
      </text>
    </g>
  );
}

const curveLine = "M0 0C6 1 9 6 13 13C16 19 20 22 24 22";

export default function App() {
  return (
    <>
      <GlobalStyle />
      <Shell>
        <TitleBar>
          <AppBadge>A6</AppBadge>
          <WindowTitle>I01-INTERGRAPH_Post.xml - Apros 6 Nuclear</WindowTitle>
          <WindowButton>
            <Glyph $size={12}>
              <path d="M1 8.500h14" stroke="#000" strokeWidth="1.300" />
            </Glyph>
          </WindowButton>
          <WindowButton>
            <Glyph $size={11}>
              <rect x=".7" y=".7" width="14.600" height="14.600" fill="none" stroke="#000" strokeWidth="1.400" />
            </Glyph>
          </WindowButton>
          <WindowButton>
            <Glyph $size={11}>
              <path d="M.5.500l15 15M15.500.500l-15 15" stroke="#000" strokeWidth="1.300" />
            </Glyph>
          </WindowButton>
        </TitleBar>
        <MenuBar>
          <span>File</span>
          <span>Edit</span>
          <span>Window</span>
          <span>Help</span>
        </MenuBar>

        <ToolRows>
          <ToolRow $tall>
            <ModelCombo>
              &lt;no active Apros model&gt;
              <Chevron />
            </ModelCombo>
            <ToggleButton>
              N<ThinParen>(L)</ThinParen>
            </ToggleButton>
            <Slot><AproSwitchIcon /></Slot>
            <Separator />
            <Slot><DbIcon /></Slot>
            <Slot><DbSaveIcon /></Slot>
            <Slot><UndoIcon /></Slot>
            <Slot><UndoIcon ghost /></Slot>
            <Slot><StepIcon /></Slot>
            <Slot><StepIcon bars /></Slot>
            <DropArrow />
            <Spacer $w={2} />
            <TimeField>0:00:00.000</TimeField>
            <Slot $gap={1}><ICIcon up /></Slot>
            <Slot><ICIcon /></Slot>
            <Slot><ClockIcon /></Slot>
            <Slot><ConsoleIcon /></Slot>
            <SpeedBox $w={42}>0.00 x</SpeedBox>
            <SpeedBox $w={36}>0 ips</SpeedBox>
            <Slot $gap={3}><ExportArrowIcon /></Slot>
            <Slot><AlignIcon /></Slot>
            <Slot><AlignIcon flip /></Slot>
            <Slot><MoveIcon /></Slot>
            <Slot><ResizeHIcon /></Slot>
            <Slot><ResizeVIcon /></Slot>
            <Slot><ToolLetter>A</ToolLetter></Slot>
            <Slot><LinkIcon /></Slot>
            <Slot><EditBoxIcon /></Slot>
            <Slot><PaletteIcon /></Slot>
            <Slot><BlankDocIcon /></Slot>
            <Slot $gap={23}><LinkIcon /></Slot>
            <Slot><ScreenPlusIcon /></Slot>
            <Slot><ScreenStackIcon /></Slot>
            <Slot><FourBoxIcon /></Slot>
          </ToolRow>
          <ToolRow>
            <Slot><PdfIcon /></Slot>
            <Slot><CursorIcon muted /></Slot>
            <Slot><BrushIcon /></Slot>
            <Slot><DocLinkIcon /></Slot>
            <StyleCombo $w={120} $muted>
              <RingIcon />
              <ComboLabel>Default colors</ComboLabel>
              <ComboChevron $muted><Chevron color="#a8a8a8" /></ComboChevron>
            </StyleCombo>
            <StyleCombo $w={153} $muted>
              <CalendarIcon />
              <ComboLabel>New</ComboLabel>
              <ComboChevron $muted><Chevron color="#a8a8a8" /></ComboChevron>
            </StyleCombo>
            <Slot><TableIcon /></Slot>
            <Slot><Magnifier /></Slot>
            <Slot><Magnifier mark="plus" /></Slot>
            <Slot><Magnifier mark="minus" /></Slot>
            <Slot><PdfIcon /></Slot>
            <StyleCombo $w={119}>
              <ColorWheel />
              <ComboLabel>Default colors</ComboLabel>
              <ComboChevron><Chevron color="#444" /></ComboChevron>
            </StyleCombo>
            <Spacer $w={1} />
            <PickButton><CursorIcon /></PickButton>
            <Slot><TableIcon /></Slot>
            <Slot><Magnifier /></Slot>
            <Slot><Magnifier mark="plus" /></Slot>
            <Slot><Magnifier mark="minus" /></Slot>
            <Slot><PdfIcon muted /></Slot>
          </ToolRow>
        </ToolRows>

        <Workspace>
          <Column $w={349}>
            <Panel>
              <TabStrip>
                <Tab $w={46} $tone="white" $gap={4}>
                  <HierarchyIcon />M
                </Tab>
                <TabCurve $overlap={18}>
                  <path d={`${curveLine}V24H0Z`} fill="#fff" />
                  <path d={curveLine} fill="none" stroke={GREY} />
                </TabCurve>
                <Tab $w={32} $line $gap={1}>
                  <MxPlusIcon />S
                </Tab>
                <Tab $w={34} $line>
                  <ClockPencilIcon />S
                </Tab>
                <Tab $w={33} $line>
                  <FlagIcon />E
                </Tab>
                <Tab $w={32} $line>
                  <WarningIcon />I
                </Tab>
                <Tab $w={36} $line>
                  <WrenchIcon />D
                </Tab>
                <Tab $w={30} $gap={0}>
                  <Spacer $w={4} />
                  <OverflowChevrons>»</OverflowChevrons>
                  <OverflowCount>2</OverflowCount>
                </Tab>
                <PanelActions>
                  <MinBtn />
                  <MaxBtn />
                </PanelActions>
              </TabStrip>
              <LeftBody>
                <FilterBar $h={19}>
                  <EraserIcon />
                </FilterBar>
                <TreeList>
                  {treeItems.map((item) => (
                    <TreeRow key={item.label} $depth={item.depth} $tracking={item.tracking}>
                      <Twisty>
                        {!item.leaf && (
                          <Chevron color={item.open ? "#444" : "#9a9a9a"} dir={item.open ? "down" : "right"} />
                        )}
                      </Twisty>
                      <TreeIconBox>{item.icon}</TreeIconBox>
                      {item.label}
                    </TreeRow>
                  ))}
                </TreeList>
              </LeftBody>
            </Panel>
          </Column>

          <Column $w={648}>
            <Panel $h={421}>
              <TabStrip>
                <Tab $w={182} $tone="blue">
                  <DrawingIcon />
                  <ComboLabel>I01-INTERGRAPH_Post.xml</ComboLabel>
                  <CloseTabIcon />
                </Tab>
                <TabCurve $w={29}>
                  <path d={`${curveLine}V24H0Z`} fill="#a9c2dd" />
                  <path d={curveLine} fill="none" stroke={GREY} />
                </TabCurve>
                <PanelActions>
                  <MinBtn />
                  <MaxBtn />
                </PanelActions>
              </TabStrip>
              <EditorFrame>
                <Canvas>
                  <Rulers />
                  <Diagram />
                </Canvas>
              </EditorFrame>
            </Panel>

            <Panel $h={200}>
              <TabStrip>
                <Tab $w={251} $tone="white" $gap={4}>
                  <PropsTableIcon />
                  <TabTitle>$537766 : (ProcessInstrumentationFunction)</TabTitle>
                </Tab>
                <TabCurve $w={29}>
                  <path d={`${curveLine}V24H0Z`} fill="#fff" />
                  <path d={curveLine} fill="none" stroke={GREY} />
                </TabCurve>
                <PanelActions>
                  <SortAzIcon />
                  <PinEditIcon />
                  <TableUndoIcon />
                  <MinBtn />
                  <MaxBtn />
                </PanelActions>
              </TabStrip>
              <PropsBody>
                <FilterBar $h={20}>
                  <EraserIcon />
                </FilterBar>
                <Grid>
                  <GridRow $header>
                    <GridCell $pad={6}>Property</GridCell>
                    <GridCell $pad={6}>Value</GridCell>
                  </GridRow>
                  {properties.map((row, i) => (
                    <GridRow key={i}>
                      <GridCell $pad={24}>{row.name}</GridCell>
                      <GridCell $pad={5} $tracking={row.tracking}>{row.value}</GridCell>
                    </GridRow>
                  ))}
                </Grid>
                <BottomTabs>
                  <BottomTab $active>Properties</BottomTab>
                  <BottomTab>GA 14 (DexpiAttributes)</BottomTab>
                </BottomTabs>
              </PropsBody>
            </Panel>
          </Column>
        </Workspace>

        <StatusBar>
          <SearchSmallIcon />
          <StatusInput />
          &lt;no key process variables&gt;
        </StatusBar>
      </Shell>
    </>
  );
}
